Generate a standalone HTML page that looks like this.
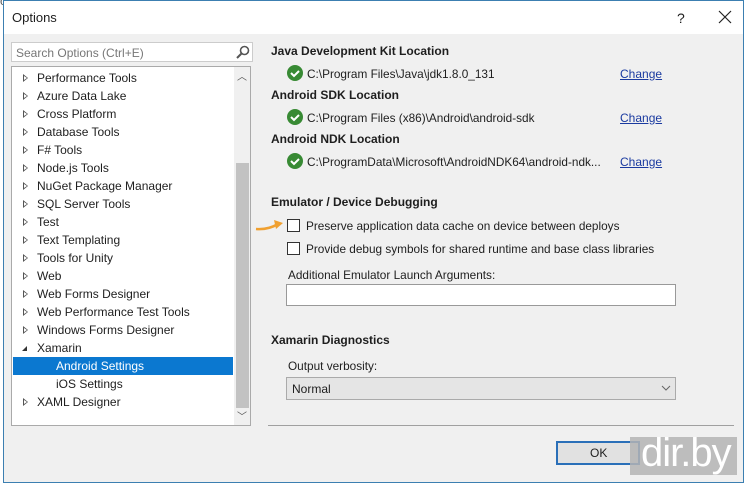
<!DOCTYPE html>
<html><head><style>
body{margin:0;width:753px;height:485px;overflow:hidden;background:#fff;font-family:"Liberation Sans",sans-serif;font-size:12px;color:#1e1e1e;position:relative}
.a{position:absolute;white-space:nowrap}
.dlg{position:absolute;left:3px;top:0;width:741px;height:483px;background:#f0f0f0;border:1px solid #3c7fb1;box-sizing:border-box}
.ti{position:absolute;left:37px}
.tri{position:absolute;left:23px;width:0;height:0;border-left:5px solid transparent;border-top:4px solid transparent;border-bottom:4px solid transparent}
.h{font-weight:bold;position:absolute;left:271px}
.chk{position:absolute;left:287px;width:16px;height:16px;border-radius:50%;background:#388a34}
.lnk{position:absolute;left:620px;text-decoration:underline;color:#1a3aa0}
.cb{position:absolute;left:287px;width:11px;height:11px;border:1px solid #333;background:#fff}
.r{font-size:11.8px}
</style></head><body>
<div class="a" style="left:0;top:-6px;color:#555;font-size:12px">cessor  xb2  Framework)</div>
<div class="dlg">
 <div style="position:absolute;left:0;top:0;width:100%;height:33px;background:#fff"></div>
</div>
<div class="a" style="left:12px;top:10px;font-size:13px">Options</div>
<div class="a" style="left:677px;top:10px;font-size:14px">?</div>
<svg class="a" style="left:718px;top:10px" width="14" height="14"><path d="M1 1L13 13M13 1L1 13" stroke="#222" stroke-width="1.2"/></svg>
<div class="a" style="left:11px;top:42px;width:242px;height:20px;background:#fff;border:1px solid #ccc;box-sizing:border-box"></div>
<div class="a" style="left:16px;top:46px;color:#777">Search Options (Ctrl+E)</div>
<svg class="a" style="left:235px;top:44px" width="16" height="16"><circle cx="9.5" cy="6.5" r="4" fill="none" stroke="#555" stroke-width="1.6"/><line x1="6.5" y1="9.5" x2="2" y2="14" stroke="#555" stroke-width="2"/></svg>
<div class="a" style="left:11px;top:66px;width:240px;height:360px;background:#fff;border:1px solid #aaa;box-sizing:border-box"></div>
<div class="a" style="left:234px;top:67px;width:16px;height:358px;background:#f0f0f0"></div>
<div class="a" style="left:236px;top:163px;width:13px;height:245px;background:#c2c2c2"></div>
<div class="a" style="left:237px;top:68px;font-size:10px;color:#555">︿</div>
<div class="a" style="left:237px;top:408px;font-size:10px;color:#555">﹀</div>
<div class="a" style="left:13px;top:357px;width:220px;height:18px;background:#0b78d0"></div>
<div id="tree"></div>
<script>
var items=["Performance Tools","Azure Data Lake","Cross Platform","Database Tools","F# Tools","Node.js Tools","NuGet Package Manager","SQL Server Tools","Test","Text Templating","Tools for Unity","Web","Web Forms Designer","Web Performance Test Tools","Windows Forms Designer","Xamarin","Android Settings","iOS Settings","XAML Designer"];
var h="";items.forEach(function(t,i){var y=71+i*18;
if(i==16||i==17){h+='<div class="a" style="left:56px;top:'+y+'px;'+(i==16?'color:#fff':'')+'">'+t+'</div>';}
else{h+='<div class="a ti" style="top:'+y+'px">'+t+'</div>';
if(i==15)h+='<div class="a" style="left:22px;top:'+(y+5)+'px;width:0;height:0;border-right:5px solid #333;border-top:5px solid transparent"></div>';
else h+='<div class="tri" style="top:'+(y+3)+'px;border-left:5px solid #555"></div><div class="tri" style="top:'+(y+5)+'px;left:24px;border-left:3px solid #fff;border-top:2px solid transparent;border-bottom:2px solid transparent"></div>';}
});document.getElementById("tree").innerHTML=h;
</script>
<div class="h" style="top:44px">Java Development Kit Location</div>
<div class="chk" style="top:65px"></div><div class="a r" style="left:307px;top:67px">C:\Program Files\Java\jdk1.8.0_131</div><div class="lnk" style="top:67px">Change</div>
<div class="h" style="top:88px">Android SDK Location</div>
<div class="chk" style="top:109px"></div><div class="a r" style="left:307px;top:111px">C:\Program Files (x86)\Android\android-sdk</div><div class="lnk" style="top:111px">Change</div>
<div class="h" style="top:132px">Android NDK Location</div>
<div class="chk" style="top:153px"></div><div class="a r" style="left:307px;top:155px">C:\ProgramData\Microsoft\AndroidNDK64\android-ndk...</div><div class="lnk" style="top:155px">Change</div>
<svg class="a" style="left:287px;top:65px" width="16" height="110"><g fill="none" stroke="#fff" stroke-width="2"><path d="M4 8l3 3 5-5"/><path d="M4 52l3 3 5-5"/><path d="M4 96l3 3 5-5"/></g></svg>
<div class="h" style="top:195px">Emulator / Device Debugging</div>
<svg class="a" style="left:254px;top:218px" width="32" height="14"><path d="M2 11 Q14 12 24 6" fill="none" stroke="#f0a030" stroke-width="2.5"/><path d="M20 2 L29 5 L22 11Z" fill="#f0a030"/></svg>
<div class="cb" style="top:219px"></div><div class="a r" style="left:306px;top:219px">Preserve application data cache on device between deploys</div>
<div class="cb" style="top:242px"></div><div class="a r" style="left:306px;top:242px">Provide debug symbols for shared runtime and base class libraries</div>
<div class="a r" style="left:288px;top:268px">Additional Emulator Launch Arguments:</div>
<div class="a" style="left:286px;top:284px;width:390px;height:22px;background:#fff;border:1px solid #999;box-sizing:border-box"></div>
<div class="h" style="top:333px">Xamarin Diagnostics</div>
<div class="a r" style="left:288px;top:359px">Output verbosity:</div>
<div class="a" style="left:286px;top:377px;width:390px;height:23px;background:#e5e5e5;border:1px solid #aaa;box-sizing:border-box"></div>
<div class="a" style="left:292px;top:382px">Normal</div>
<svg class="a" style="left:661px;top:385px" width="10" height="6"><path d="M1 1L5 5L9 1" fill="none" stroke="#666"/></svg>
<div class="a" style="left:268px;top:425px;width:466px;height:1px;background:#a0a0a0"></div>
<div class="a" style="left:556px;top:441px;width:84px;height:24px;background:#e1e1e1;border:2px solid #2a6fb8;box-sizing:border-box"></div>
<div class="a" style="left:590px;top:446px">OK</div>
<div class="a" style="left:630px;top:437px;width:107px;height:38px;background:rgba(180,180,180,.85)"></div>
<div class="a" style="left:641px;top:431px;font-size:40px;color:#fff;letter-spacing:-1px">dir.by</div>
</body></html>
